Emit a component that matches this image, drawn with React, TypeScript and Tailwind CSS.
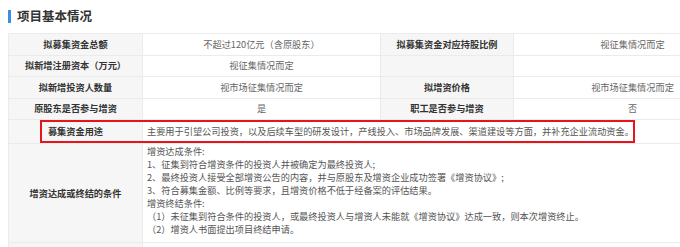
const cjk = { fontFamily: '"Noto Sans CJK SC", "Noto Sans", sans-serif' };

const rows: [string, string, string, string][] = [
  ["拟募集资金总额", "不超过120亿元（含原股东）", "拟募集资金对应持股比例", "视征集情况而定"],
  ["拟新增注册资本（万元）", "视征集情况而定", "", ""],
  ["拟新增投资人数量", "视市场征集情况而定", "拟增资价格", "视市场征集情况而定"],
  ["原股东是否参与增资", "是", "职工是否参与增资", "否"],
];

const conditions = [
  "增资达成条件:",
  "1、征集到符合增资条件的投资人并被确定为最终投资人;",
  "2、最终投资人接受全部增资公告的内容，并与原股东及增资企业成功签署《增资协议》;",
  "3、符合募集金额、比例等要求，且增资价格不低于经备案的评估结果。",
  "增资终结条件:",
  "（1）未征集到符合条件的投资人，或最终投资人与增资人未能就《增资协议》达成一致，则本次增资终止。",
  "（2）增资人书面提出项目终结申请。",
];

const label = "bg-[#f6f6f6] border border-[#ebebeb] text-center font-bold text-[#333] align-middle";
const value = "bg-white border border-[#ebebeb] text-center text-[#666] align-middle";

export default function App() {
  return (
    <div className="w-[680px] h-[247px] overflow-hidden bg-white relative" style={cjk}>
      <div className="flex items-center h-[33px] pl-[8px] pb-[1px]">
        <div className="w-[3px] h-[13px] bg-[#3b8fe0]" />
        <div className="ml-[6px] text-[12.5px] font-bold text-[#333] leading-none">项目基本情况</div>
      </div>

      <table className="ml-[8px] border-collapse table-fixed w-[743px] text-[9.2px] leading-[13px]">
        <colgroup>
          <col className="w-[134px]" />
          <col className="w-[238px]" />
          <col className="w-[133px]" />
          <col className="w-[238px]" />
        </colgroup>
        <tbody>
          {rows.map((r, i) => (
            <tr key={i} className="h-[21.5px]">
              <td className={label}>{r[0]}</td>
              <td className={value}>{r[1]}</td>
              <td className={label}>{r[2]}</td>
              <td className={value}>{r[3]}</td>
            </tr>
          ))}
          <tr className="h-[24px]">
            <td className={label}>募集资金用途</td>
            <td colSpan={3} className="bg-white border border-[#ebebeb] text-[#555] px-[4px] align-middle whitespace-nowrap">
              主要用于引望公司投资，以及后续车型的研发设计，产线投入、市场品牌发展、渠道建设等方面，并补充企业流动资金。
            </td>
          </tr>
          <tr className="h-[99px]">
            <td className={label}>增资达成或终结的条件</td>
            <td colSpan={3} className="bg-white border border-[#ebebeb] text-[#555] px-[4px] pt-[1px] pb-[6px] align-top">
              {conditions.map((line) => (
                <div key={line} className="whitespace-nowrap">{line}</div>
              ))}
            </td>
          </tr>
          <tr className="h-[22px]">
            <td className={label} />
            <td colSpan={3} className="bg-white border border-[#ebebeb]" />
          </tr>
        </tbody>
      </table>

      {/* highlight around the fund-use row */}
      <div className="absolute left-[40px] top-[120px] w-[595px] h-[23px] border-2 border-[#e8141b] pointer-events-none" />
    </div>
  );
}
